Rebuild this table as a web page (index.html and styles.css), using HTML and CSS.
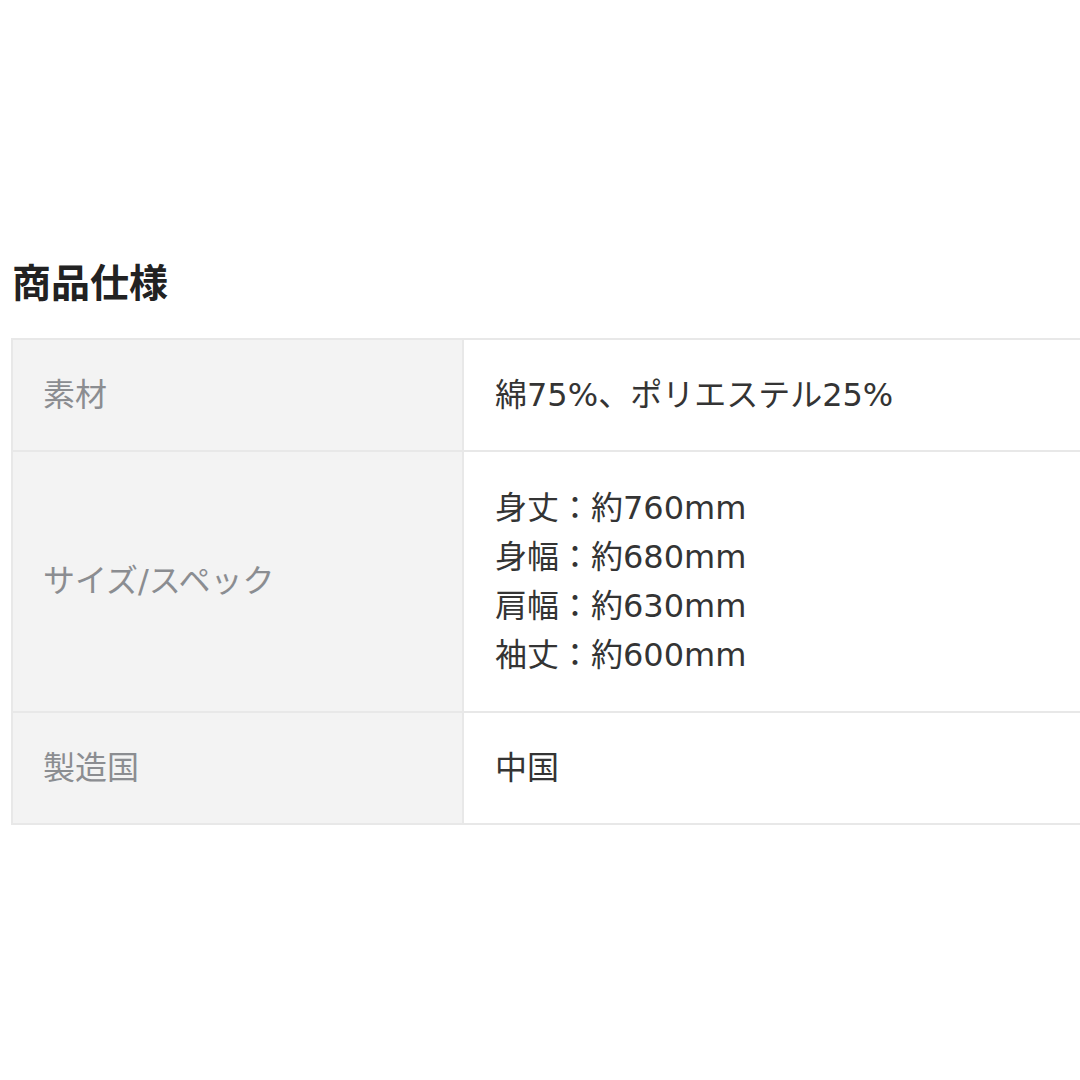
FILE: index.html
```html
<!DOCTYPE html>
<html lang="ja">
<head>
<meta charset="utf-8">
<link rel="stylesheet" href="styles.css">
</head>
<body>
<main class="page">
  <h2 class="title">商品仕様</h2>
  <table class="spec">
    <tr class="row-1">
      <th>素材</th>
      <td>綿75%、ポリエステル25%</td>
    </tr>
    <tr class="row-2">
      <th>サイズ/スペック</th>
      <td>身丈：約760mm<br>身幅：約680mm<br>肩幅：約630mm<br>袖丈：約600mm</td>
    </tr>
    <tr class="row-3">
      <th>製造国</th>
      <td>中国</td>
    </tr>
  </table>
</main>
</body>
</html>
```
FILE: styles.css
```css
html, body {
  margin: 0;
  padding: 0;
  background: #ffffff;
}
body {
  width: 1080px;
  height: 1080px;
  overflow: hidden;
  font-family: "Noto Sans CJK JP", "Noto Sans", sans-serif;
}
.page {
  padding: 254px 0 0 11px;
}
.title {
  margin: 0 0 32px 1px;
  font-size: 39px;
  line-height: 52px;
  font-weight: 700;
  color: #222222;
}
.spec {
  border-collapse: collapse;
  width: 1100px;
  table-layout: fixed;
}
.spec th, .spec td {
  border: 2px solid #e8e8e8;
  font-family: "DejaVu Sans", "Noto Sans CJK JP", sans-serif;
  font-size: 32px;
  font-weight: 400;
  text-align: left;
  vertical-align: middle;
  line-height: 49px;
}
.spec th {
  width: 451px;
  box-sizing: border-box;
  background: #f3f3f3;
  color: #8b8d91;
  padding: 0 0 0 30px;
}
.spec td {
  background: #ffffff;
  color: #343434;
  padding: 0 0 0 31px;
}
.row-1 th, .row-1 td { height: 110px; }
.row-2 th, .row-2 td { height: 259px; }
.row-3 th, .row-3 td { height: 110px; }
```
